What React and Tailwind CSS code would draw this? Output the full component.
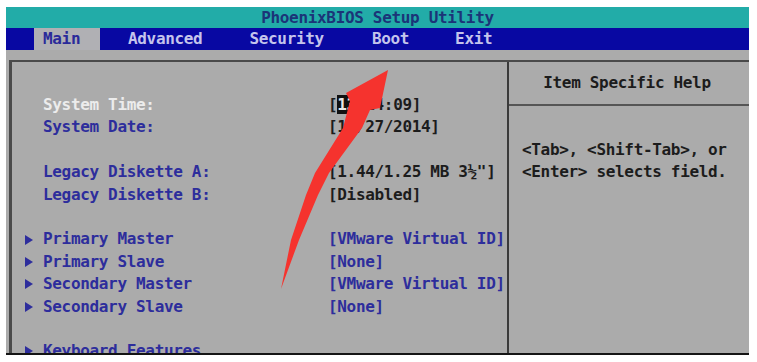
import React from "react";

const Tri = () => (
  <svg width="9" height="10" viewBox="0 0 9 10" className="inline-block">
    <polygon points="0,0 8,5 0,10" fill="#2d2d9c" />
  </svg>
);

function Row({ arrow, label, value, labelCls = "text-[#2d2d9c]", valueCls = "text-[#1c1c1c]", children }) {
  return (
    <div className="flex h-[22.4px] leading-[22.4px] items-center whitespace-pre">
      <div className="w-[18px] flex items-center">{arrow ? <Tri /> : null}</div>
      <div className={"w-[285px] " + labelCls}>{label}</div>
      <div className={valueCls}>{children ?? value}</div>
    </div>
  );
}

export default function App() {
  return (
    <div className="w-[757px] h-[362px] bg-white pt-[7px] pl-[6px] overflow-hidden">
      <div
        className="w-[743px] h-[348px] bg-[#ababab] border-b-2 border-[#141414] flex flex-col overflow-hidden font-bold text-[16px] tracking-[-0.33px]"
        style={{ fontFamily: '"DejaVu Sans Mono", "Liberation Mono", monospace' }}
      >
        <div className="h-[21px] bg-[#22aca8] flex items-center justify-center text-[#1b3478] leading-none">
          <span>PhoenixBIOS Setup Utility</span>
        </div>
        <div className="h-[22px] bg-[#0808a2] flex items-stretch text-[#c4c4ec] leading-none">
          <div className="w-[28px]" />
          <div className="w-[66px] bg-[#b0b0b4] text-[#2a2a9a] flex items-center pl-[9px]">Main</div>
          <div className="ml-[28px] flex items-center">Advanced</div>
          <div className="ml-[47px] flex items-center">Security</div>
          <div className="ml-[48px] flex items-center">Boot</div>
          <div className="ml-[46px] flex items-center">Exit</div>
        </div>
        <div className="h-[10px] shrink-0" />
        <div className="flex-1 ml-[3px] border-t-2 border-l-[3px] border-[#4a4a4a] flex min-h-0">
          <div className="w-[495px] pt-[32px] pl-[13px] overflow-hidden">
            <Row label="System Time:" labelCls="text-[#ececec]">
              [<span className="bg-[#111] text-[#e8e8e8]">13</span>:14:09]
            </Row>
            <Row label="System Date:" value="[11/27/2014]" />
            <div className="h-[22.4px]" />
            <Row label="Legacy Diskette A:" value={'[1.44/1.25 MB 3\u00bd"]'} />
            <Row label="Legacy Diskette B:" value="[Disabled]" />
            <div className="h-[22.4px]" />
            <Row arrow label="Primary Master" value="[VMware Virtual ID]" valueCls="text-[#2d2d9c]" />
            <Row arrow label="Primary Slave" value="[None]" valueCls="text-[#2d2d9c]" />
            <Row arrow label="Secondary Master" value="[VMware Virtual ID]" valueCls="text-[#2d2d9c]" />
            <Row arrow label="Secondary Slave" value="[None]" valueCls="text-[#2d2d9c]" />
            <div className="h-[22.4px]" />
            <Row arrow label="Keyboard Features" value="" />
          </div>
          <div className="w-[2px] bg-[#3a3a3a]" />
          <div className="flex-1 flex flex-col">
            <div className="h-[44px] border-b-2 border-[#555] flex items-center justify-center text-[#1c1c1c]">
              <span className="pr-[4px]">Item Specific Help</span>
            </div>
            <div className="pt-[33px] pl-[13px] text-[#1c1c1c] leading-[22px] whitespace-pre">
              <div>{"<Tab>, <Shift-Tab>, or"}</div>
              <div>{"<Enter> selects field."}</div>
            </div>
          </div>
        </div>
      </div>
      <svg className="absolute left-0 top-0 pointer-events-none" width="757" height="362" viewBox="0 0 757 362">
        <polygon
          fill="#f5332e"
          points="388,70 380,108 370,110 362,128 329,173 318,195 299,240 281,289 291,240 306,195 315,173 343,128 350,101 346,93"
        />
      </svg>
    </div>
  );
}
